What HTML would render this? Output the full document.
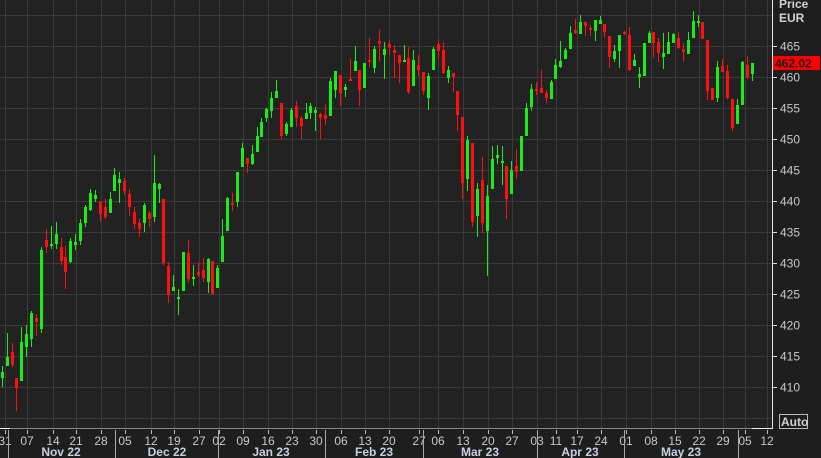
<!DOCTYPE html>
<html><head><meta charset="utf-8"><style>
html,body{margin:0;padding:0;background:#1e1e1e;width:821px;height:458px;overflow:hidden}
svg{display:block}
text{font-family:"Liberation Sans",sans-serif}
</style></head><body>
<svg id="s" width="821" height="458" xmlns="http://www.w3.org/2000/svg">
<rect x="0" y="0" width="821" height="458" fill="#1e1e1e"/>
<rect x="0" y="0" width="772" height="428" fill="#222222"/>
<g id="grid" stroke="#3b3b3b" stroke-width="1"></g>
<g id="c"></g>
<line x1="772.5" y1="0" x2="772.5" y2="428" stroke="#e8e8e8"/>
<line x1="0" y1="428.5" x2="752" y2="428.5" stroke="#8a8a8a"/>
<line x1="752" y1="428.5" x2="773" y2="428.5" stroke="#f0f0f0"/>
<line x1="0" y1="428.5" x2="10" y2="428.5" stroke="#f0f0f0"/>
<g id="ax" fill="#c8c8c8" font-size="12"></g>
<text x="779" y="8" fill="#d0d0d0" font-size="12" font-weight="bold">Price</text>
<text x="779" y="22" fill="#d0d0d0" font-size="12" font-weight="bold">EUR</text>
<rect x="773" y="56" width="47" height="14" fill="#ff0000"/>
<text x="775" y="67.5" fill="#1a1a1a" font-size="12" font-weight="bold">462.02</text>
<rect x="779.5" y="414.5" width="28" height="14" fill="none" stroke="#bbb"/>
<text x="781" y="426" fill="#d0d0d0" font-size="12" font-weight="bold">Auto</text>
</svg>
<script>
var NS="http://www.w3.org/2000/svg";
function el(p,t,a,txt){var e=document.createElementNS(NS,t);for(var k in a)e.setAttribute(k,a[k]);if(txt)e.textContent=txt;document.getElementById(p).appendChild(e);}
var ys=[15,46,77,108,139,170,201,232,263,294,325,356,387,418];
ys.forEach(function(y){el("grid","line",{x1:0,x2:772,y1:y+.5,y2:y+.5});});
var prices=[465,460,455,450,445,440,435,430,425,420,415,410];
prices.forEach(function(p,i){var y=ys[i+1];el("ax","line",{x1:772,x2:777,y1:y+.5,y2:y+.5,stroke:"#ddd"});el("ax","text",{x:780,y:y+4.5},""+p);});
var d=[[5,"31"],[27,"07"],[53,"14"],[76,"21"],[101,"28"],[125,"05"],[151,"12"],[174,"19"],[199,"27"],[219,"02"],[243,"09"],[268,"16"],[292,"23"],[316,"30"],[341,"06"],[365,"13"],[389,"20"],[419,"27"],[438,"06"],[463,"13"],[488,"20"],[512,"27"],[537,"03"],[556,"11"],[577,"17"],[601,"24"],[626,"01"],[651,"08"],[675,"15"],[699,"22"],[723,"29"],[745,"05"],[767,"12"]];
d.forEach(function(a){var x=a[0];if(x<772)el("grid","line",{x1:x+.5,x2:x+.5,y1:0,y2:428});el("ax","line",{x1:x+.5,x2:x+.5,y1:430,y2:434,stroke:"#bbb"});el("ax","text",{x:x,y:445,"text-anchor":"middle"},a[1]);});
[8,115,218,325,423,537,624,738].forEach(function(x){el("ax","line",{x1:x+.5,x2:x+.5,y1:430,y2:458,stroke:"#aaa"});});
[[61,"Nov 22"],[167,"Dec 22"],[271,"Jan 23"],[374,"Feb 23"],[480,"Mar 23"],[580,"Apr 23"],[681,"May 23"]].forEach(function(a){el("ax","text",{x:a[0],y:456,"text-anchor":"middle","font-weight":"bold",fill:"#c8d0e0"},a[1]);});
// x, open, close, high, low (pixel y)
var C=[[2,378,372,366,387],[7,366,357,333,366],[12,352,365,343,367],[16,378,388,378,411],[21,381,342,327,381],[26,347,334,325,357],[31,339,313,311,347],[36,318,322,314,336],[41,329,250,247,333],[46,240,247,229,253],[51,246,244,226,249],[56,244,234,222,249],[61,247,261,238,265],[65,257,272,246,289],[70,262,241,238,263],[75,245,242,234,250],[80,241,223,219,245],[85,223,207,205,227],[90,210,193,189,211],[95,199,195,190,202],[100,202,214,201,222],[105,207,217,199,219],[110,213,199,192,213],[114,191,175,168,191],[119,183,179,172,203],[124,181,191,178,195],[129,194,207,189,216],[134,212,224,207,229],[139,223,229,219,237],[144,223,205,203,232],[149,213,219,211,227],[154,217,183,155,222],[159,189,184,183,203],[163,199,263,199,265],[168,266,295,262,303],[173,291,287,275,291],[178,299,297,289,315],[183,291,252,252,291],[188,253,279,240,282],[193,279,277,265,286],[198,272,275,262,277],[203,270,278,258,282],[208,282,259,258,293],[212,261,294,261,294],[217,288,268,265,288],[222,262,236,219,262],[227,231,198,197,231],[232,203,204,193,211],[237,202,172,172,207],[242,167,148,143,167],[247,158,164,158,173],[252,164,154,145,165],[257,152,136,127,152],[261,137,122,118,137],[266,118,109,108,122],[271,111,98,92,118],[276,98,91,80,98],[281,103,136,103,139],[286,134,124,122,136],[291,127,110,108,127],[296,106,118,101,127],[301,118,126,116,139],[306,119,113,103,119],[310,113,106,103,119],[315,113,110,107,131],[320,114,118,113,139],[325,115,119,104,125],[330,116,81,78,116],[335,90,71,71,98],[340,75,93,75,106],[345,90,87,84,97],[350,79,80,59,80],[355,71,61,46,71],[359,70,90,70,106],[364,88,63,63,88],[369,60,62,38,67],[374,68,49,46,73],[379,41,44,30,61],[384,55,49,42,79],[389,44,48,40,55],[394,50,53,45,78],[399,55,63,55,83],[404,62,60,45,62],[408,58,92,47,94],[413,86,60,50,86],[418,65,70,55,76],[423,72,91,72,95],[428,98,76,73,110],[433,70,49,47,70],[438,44,51,39,59],[443,50,73,42,74],[448,78,70,66,83],[453,73,77,73,92],[457,91,115,91,131],[462,117,183,117,199],[467,179,140,136,191],[472,143,222,143,227],[477,216,189,183,237],[482,180,223,157,233],[487,231,196,185,276],[492,189,159,146,189],[497,158,155,145,164],[502,162,161,146,185],[506,166,199,166,219],[511,194,170,161,194],[516,166,172,149,179],[521,171,136,136,171],[526,136,108,103,136],[531,107,89,84,111],[536,89,91,82,95],[541,88,93,70,93],[546,93,98,90,103],[551,99,82,80,99],[555,79,65,59,79],[560,67,61,41,68],[565,59,50,48,59],[570,49,33,26,49],[575,30,33,19,34],[580,34,22,15,34],[585,22,26,22,36],[590,28,30,25,36],[595,31,20,20,41],[600,24,20,16,24],[604,24,32,24,38],[609,36,57,36,68],[614,59,51,45,62],[619,51,35,35,68],[624,32,34,31,35],[629,35,70,27,71],[634,66,60,54,66],[639,77,74,67,88],[644,76,43,43,76],[649,43,33,31,43],[653,32,43,32,58],[658,42,53,38,62],[663,57,53,33,69],[668,54,42,32,54],[673,43,34,33,43],[678,38,48,32,49],[683,49,52,43,62],[688,54,40,32,54],[693,38,21,11,38],[698,23,21,15,27],[702,22,39,22,39],[707,40,91,40,100],[712,88,100,88,100],[717,98,67,61,102],[722,66,72,59,72],[727,71,98,65,99],[732,99,128,99,131],[737,124,105,99,124],[742,105,62,61,105],[747,65,77,56,79],[752,74,63,63,81]];
C.forEach(function(c){var x=c[0],o=c[1],cl=c[2],h=c[3],l=c[4];var col=cl<=o?"#19ec19":"#ff1010";if(cl==o)col="#19ec19";
el("c","rect",{x:x,y:h,width:1,height:Math.max(1,l-h),fill:col});
var t=Math.min(o,cl),b=Math.max(o,cl);el("c","rect",{x:x-1,y:t,width:3,height:Math.max(2,b-t),fill:col});});
</script>
</body></html>
